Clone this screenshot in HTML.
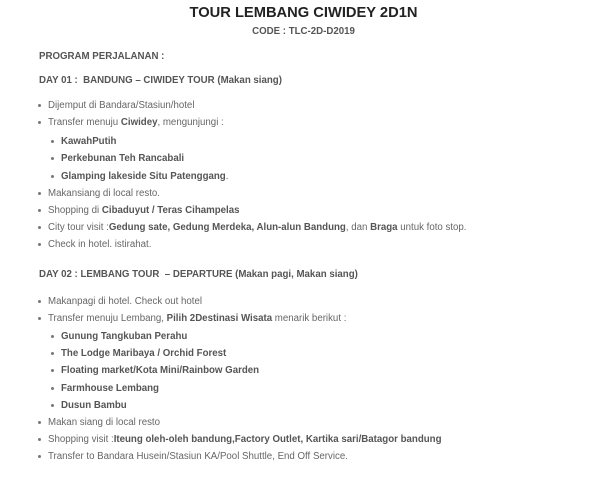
<!DOCTYPE html>
<html><head><meta charset="utf-8"><style>
body{margin:0;width:607px;height:477px;background:#fff;font-family:"Liberation Sans",sans-serif;color:#666;overflow:hidden}
.l{position:absolute;white-space:nowrap;font-size:9.7px;line-height:14px;left:48px;margin-top:1px}
.s{left:61px;font-weight:bold;color:#555}
.h{left:39px;font-weight:bold;color:#555}
b{color:#555}
.d::before{content:"";position:absolute;left:-10px;top:5px;width:3px;height:3px;border-radius:50%;background:#777}
</style></head><body>
<div class="l" style="left:0;width:607px;text-align:center;top:3px;font-size:14.7px;line-height:18px;font-weight:bold;color:#222">TOUR LEMBANG CIWIDEY 2D1N</div>
<div class="l" style="left:0;width:607px;text-align:center;top:24px;font-weight:bold;color:#555">CODE : TLC-2D-D2019</div>
<div class="l h" style="top:49px">PROGRAM PERJALANAN :</div>
<div class="l h" style="top:73px">DAY 01 :&nbsp; BANDUNG – CIWIDEY TOUR (Makan siang)</div>
<div class="l d" style="top:98px">Dijemput di Bandara/Stasiun/hotel</div>
<div class="l d" style="top:115px">Transfer menuju <b>Ciwidey</b>, mengunjungi :</div>
<div class="l d s" style="top:134px">KawahPutih</div>
<div class="l d s" style="top:151px">Perkebunan Teh Rancabali</div>
<div class="l d s" style="top:169px">Glamping lakeside Situ Patenggang<span style="font-weight:normal">.</span></div>
<div class="l d" style="top:186px">Makansiang di local resto.</div>
<div class="l d" style="top:203px">Shopping di <b>Cibaduyut / Teras Cihampelas</b></div>
<div class="l d" style="top:220px">City tour visit :<b>Gedung sate, Gedung Merdeka, Alun-alun Bandung</b>, dan <b>Braga</b> untuk foto stop.</div>
<div class="l d" style="top:237px">Check in hotel. istirahat.</div>
<div class="l h" style="top:267px">DAY 02 : LEMBANG TOUR&nbsp; – DEPARTURE (Makan pagi, Makan siang)</div>
<div class="l d" style="top:294px">Makanpagi di hotel. Check out hotel</div>
<div class="l d" style="top:311px">Transfer menuju Lembang, <b>Pilih 2Destinasi Wisata</b> menarik berikut :</div>
<div class="l d s" style="top:329px">Gunung Tangkuban Perahu</div>
<div class="l d s" style="top:346px">The Lodge Maribaya / Orchid Forest</div>
<div class="l d s" style="top:363px">Floating market/Kota Mini/Rainbow Garden</div>
<div class="l d s" style="top:381px">Farmhouse Lembang</div>
<div class="l d s" style="top:398px">Dusun Bambu</div>
<div class="l d" style="top:415px">Makan siang di local resto</div>
<div class="l d" style="top:432px">Shopping visit :<b>Iteung oleh-oleh bandung,Factory Outlet, Kartika sari/Batagor bandung</b></div>
<div class="l d" style="top:449px">Transfer to Bandara Husein/Stasiun KA/Pool Shuttle, End Off Service.</div>
</body></html>
